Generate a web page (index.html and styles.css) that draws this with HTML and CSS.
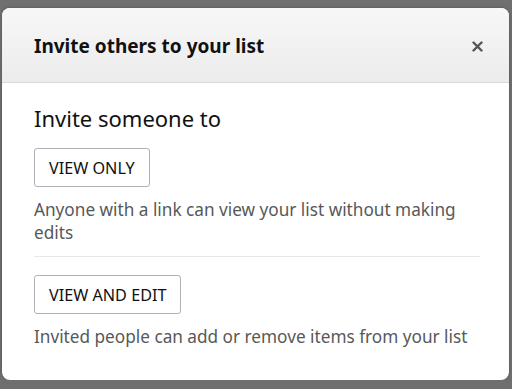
FILE: index.html
```html
<!DOCTYPE html>
<html lang="en">

<head>
    <meta charset="UTF-8">
    <meta name="viewport" content="width=device-width, initial-scale=1.0">
    <title>Invite others to your list</title>
    <link rel="stylesheet" href="styles.css">
</head>

<body>
    <div class="modal">
        <header class="modal-header">
            <h2>Invite others to your list</h2>
            <button class="close" aria-label="Close">
                <svg width="11" height="11" viewBox="0 0 11 11">
                    <path d="M1.5 1.5 L9.5 9.5 M9.5 1.5 L1.5 9.5" stroke="#555" stroke-width="2.4" stroke-linecap="round" />
                </svg>
            </button>
        </header>
        <div class="modal-body">
            <p class="lead">Invite someone to</p>
            <div class="option">
                <button class="btn">VIEW ONLY</button>
                <p class="hint">Anyone with a link can view your list without making edits</p>
            </div>
            <div class="option">
                <button class="btn">VIEW AND EDIT</button>
                <p class="hint">Invited people can add or remove items from your list</p>
            </div>
        </div>
    </div>
</body>

</html>
```

FILE: styles.css
```css
html {
    background: #6f6f6f;
}

body {
    margin: 0;
    padding: 8px 3px 0 2px;
    font-family: "Noto Sans", sans-serif;
    color: #111;
}

p {
    margin: 0;
}

.modal {
    background: #fff;
    border-radius: 8px;
    height: 372px;
    overflow: hidden;
    box-shadow: 0 0 3px rgba(0, 0, 0, 0.3);
}

.modal-header {
    height: 75px;
    box-sizing: border-box;
    padding: 2px 26px 0 32px;
    display: flex;
    align-items: center;
    justify-content: space-between;
    background: linear-gradient(#f7f7f7, #ececec);
    border-bottom: 1px solid #d8d8d8;
}

.modal-header h2 {
    margin: 0;
    font-size: 19px;
    font-weight: 700;
}

.close {
    border: 0;
    background: none;
    padding: 0;
    display: flex;
}

.modal-body {
    padding: 20px 29px 0 32px;
}

.lead {
    font-size: 22px;
    line-height: 30px;
    margin-bottom: 15px;
}

.option {
    padding-bottom: 12px;
}

.option + .option {
    border-top: 1px solid #e7e7e7;
    padding-top: 18px;
}

.btn {
    display: block;
    font-family: inherit;
    font-size: 16.2px;
    color: #111;
    background: #fff;
    border: 1px solid #adb1b8;
    border-radius: 3px;
    padding: 0 14px;
    height: 39px;
    margin-bottom: 11px;
}

.hint {
    font-size: 17.2px;
    line-height: 23px;
    color: #565959;
}
```
